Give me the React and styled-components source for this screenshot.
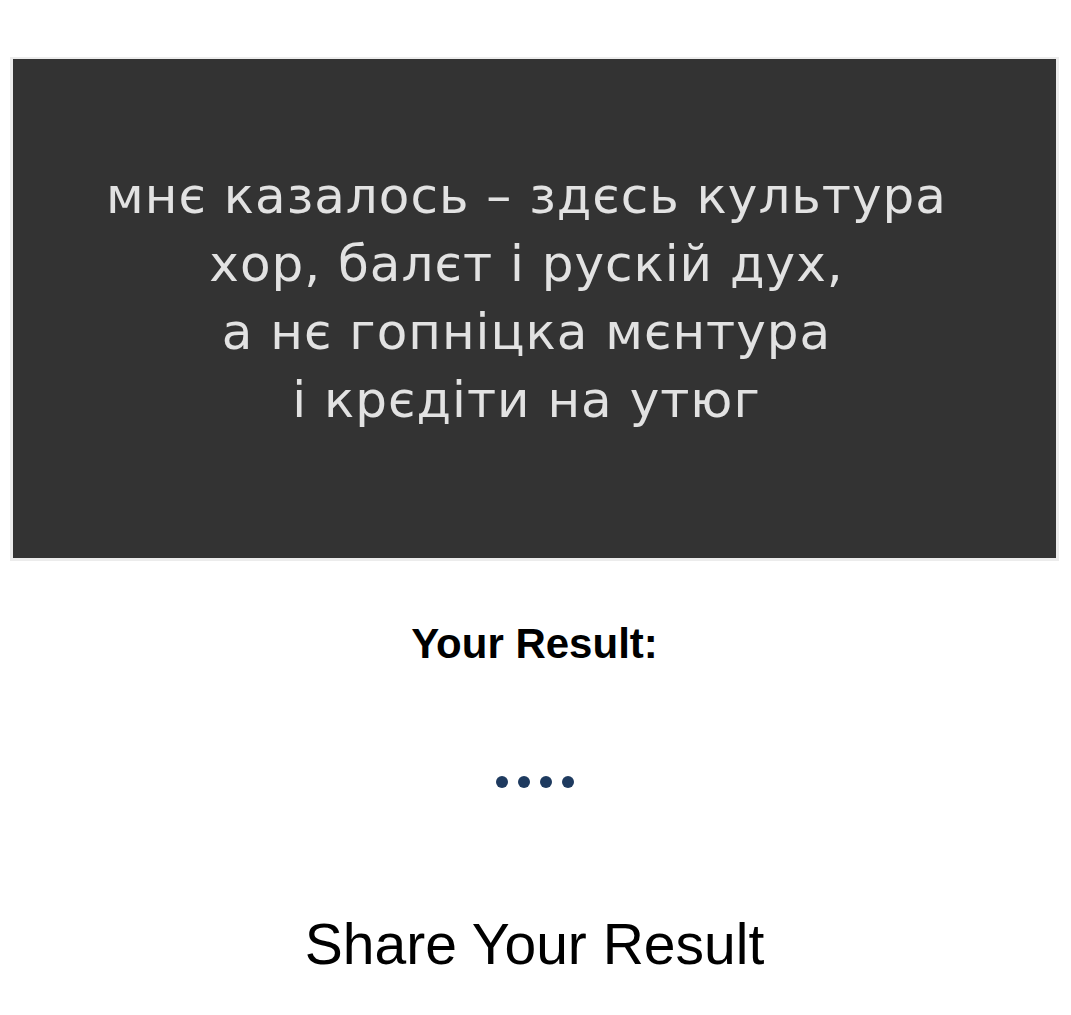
import React from 'react';
import styled, { createGlobalStyle } from 'styled-components';

const GlobalStyle = createGlobalStyle`
  body {
    margin: 0;
    background: #fff;
    font-family: "Liberation Sans", Arial, sans-serif;
  }
`;

const Page = styled.div`
  display: flex;
  flex-direction: column;
  align-items: center;
  padding: 57px 12px 0 10px;
`;

const Poster = styled.div`
  box-sizing: border-box;
  width: 100%;
  height: 504px;
  background: #333;
  border: 3px solid #ececec;
  border-top-width: 2px;
  display: flex;
  flex-direction: column;
  align-items: center;
  justify-content: center;
  padding: 0 16px 22px 0;
`;

const Verse = styled.p`
  margin: 0;
  font-family: "DejaVu Sans", Verdana, sans-serif;
  font-size: 50px;
  line-height: 68px;
  letter-spacing: 1px;
  color: #e2e2e2;
  text-align: center;
`;

const Label = styled.h2`
  margin: 59px 0 0;
  font-size: 42px;
  line-height: 48px;
  font-weight: 700;
  color: #000;
`;

const Dots = styled.div`
  display: flex;
  gap: 10px;
  margin-top: 108px;
`;

const Dot = styled.span`
  width: 12px;
  height: 12px;
  border-radius: 50%;
  background: #1e3a5f;
`;

const ShareTitle = styled.h1`
  margin: 123px 0 0;
  font-size: 57px;
  line-height: 66px;
  font-weight: 400;
  color: #000;
`;

const lines = [
  'мнє казалось – здєсь культура',
  'хор, балєт і рускій дух,',
  'а нє гопніцка мєнтура',
  'і крєдіти на утюг',
];

export default function App() {
  return (
    <>
      <GlobalStyle />
      <Page>
        <Poster>
          {lines.map((line) => (
            <Verse key={line}>{line}</Verse>
          ))}
        </Poster>
        <Label>Your Result:</Label>
        <Dots>
          {[0, 1, 2, 3].map((i) => (
            <Dot key={i} />
          ))}
        </Dots>
        <ShareTitle>Share Your Result</ShareTitle>
      </Page>
    </>
  );
}
